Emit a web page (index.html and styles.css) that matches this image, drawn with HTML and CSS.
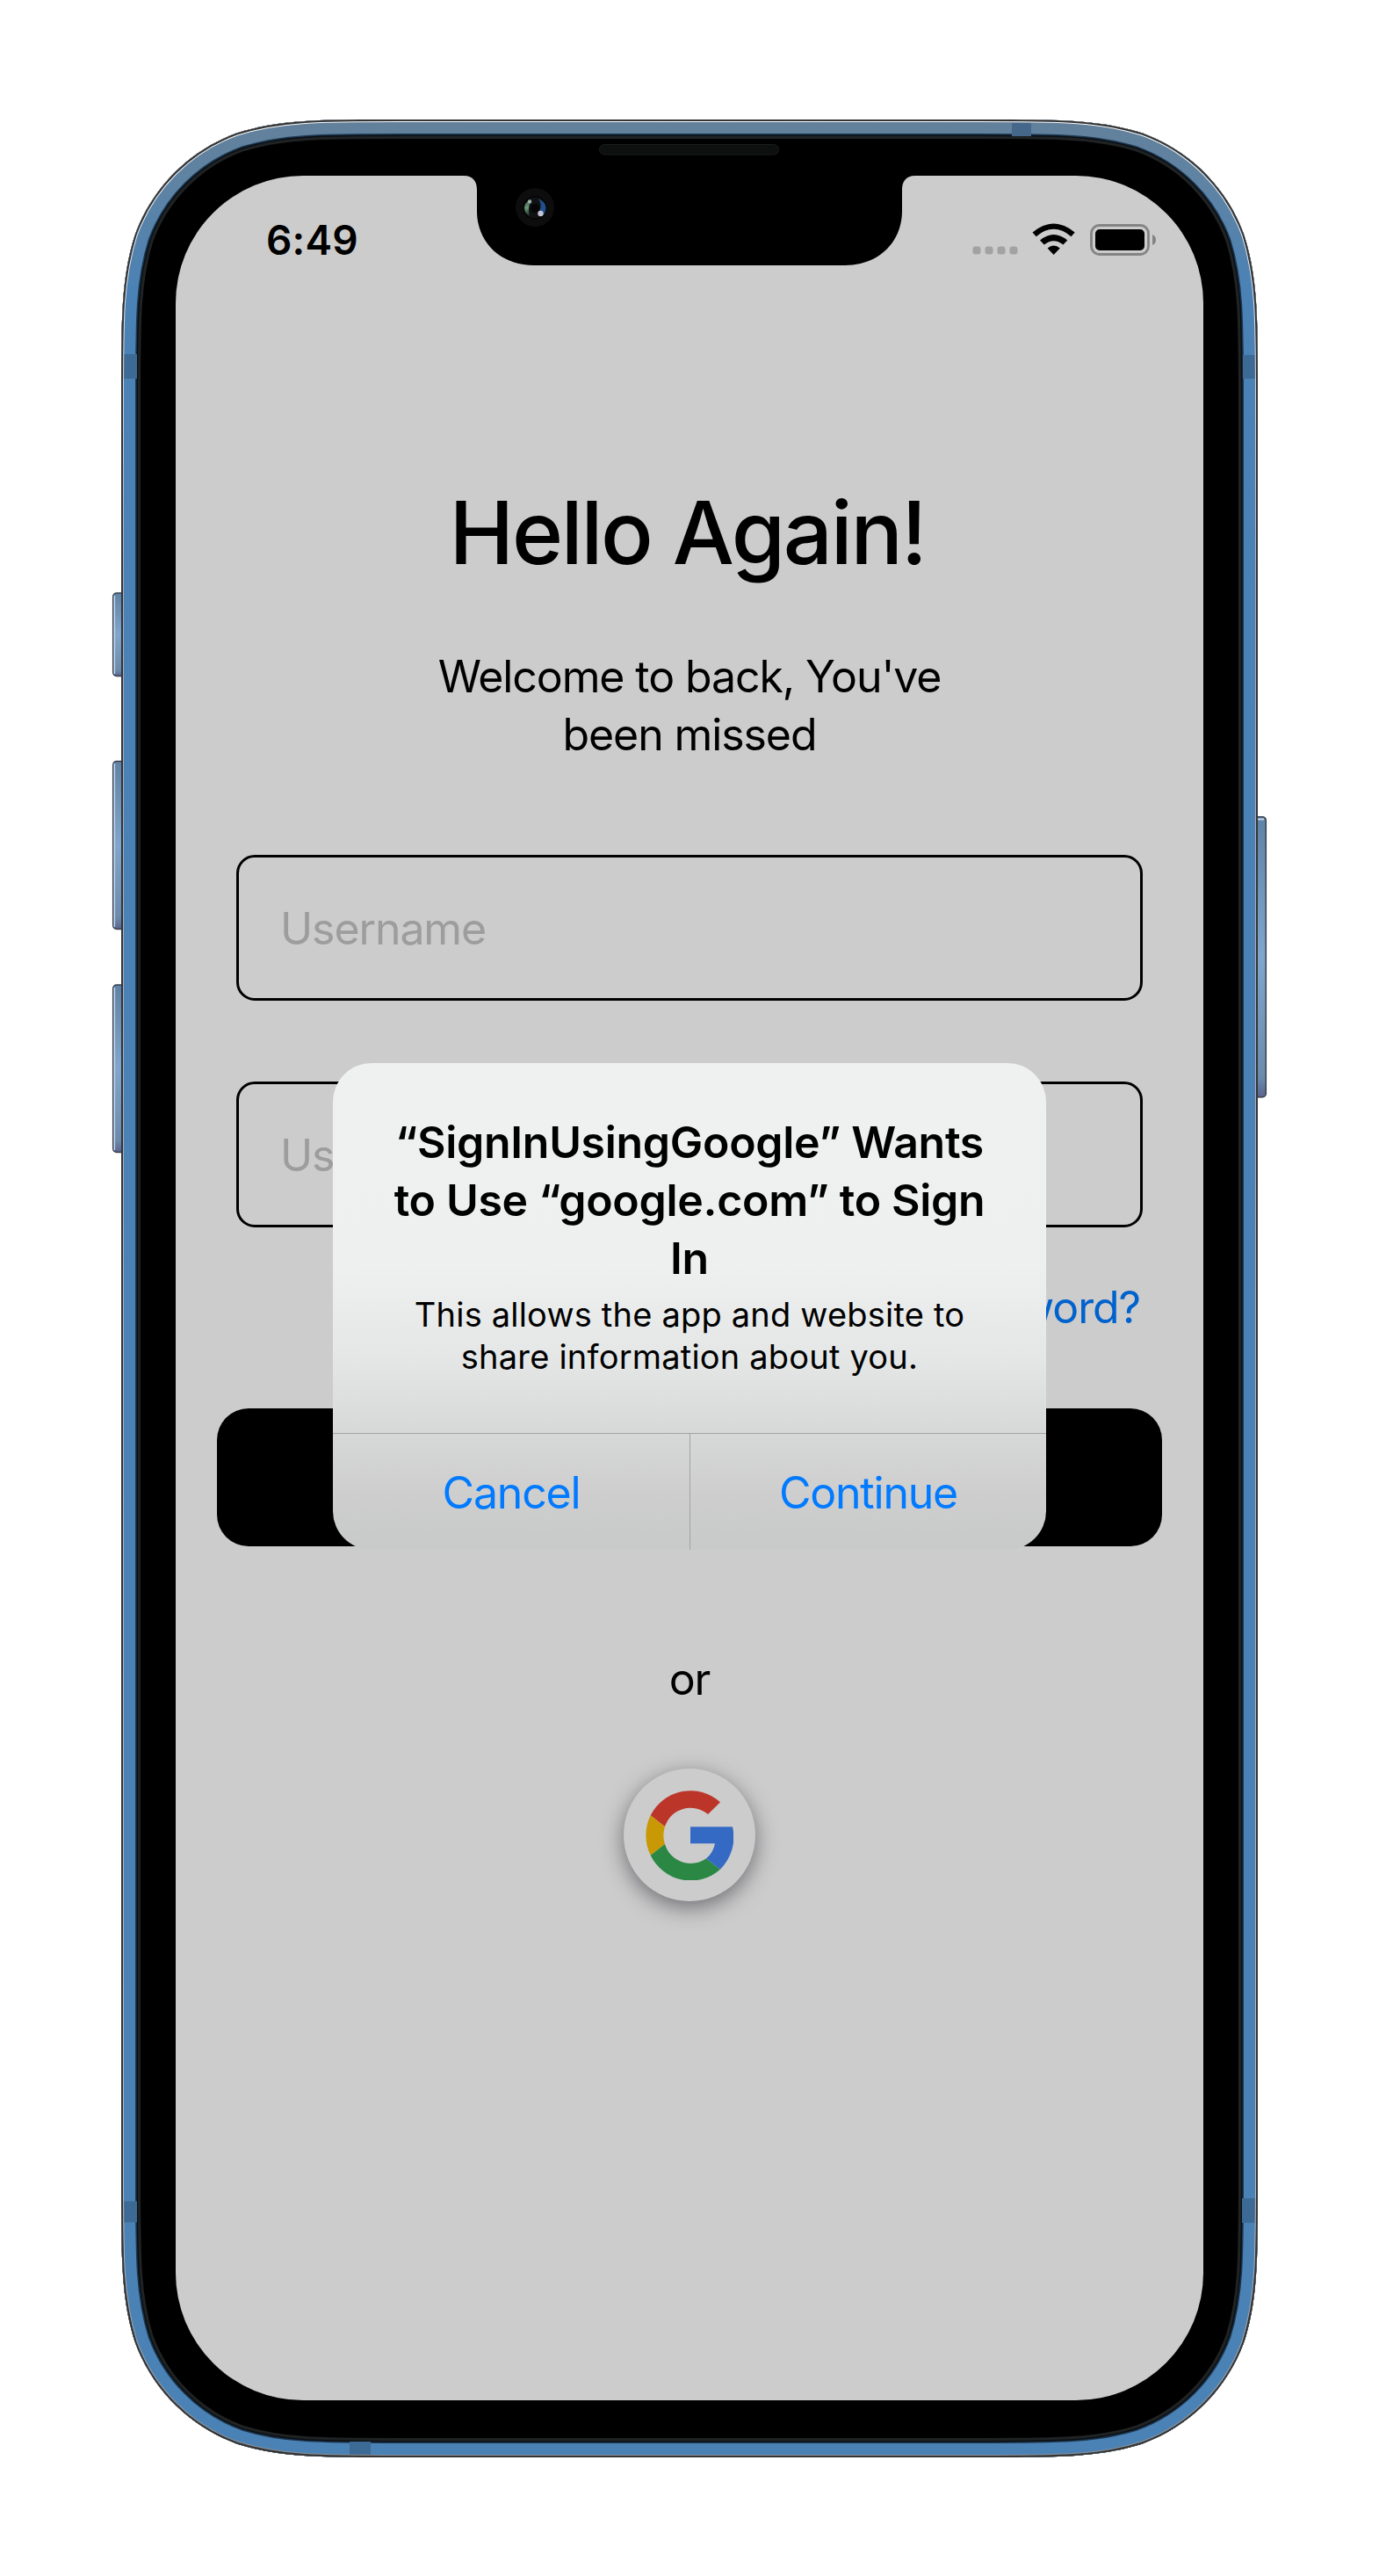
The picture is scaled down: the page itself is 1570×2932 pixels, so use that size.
FILE: index.html
```html
<!DOCTYPE html>
<html lang="en">
<head>
<meta charset="utf-8">
<title>Hello Again!</title>
<link rel="stylesheet" href="styles.css">
</head>
<body>
<div class="device">
  <svg class="frame" viewBox="0 0 1570 2932" aria-hidden="true">
    <defs>
      <linearGradient id="metal" gradientUnits="userSpaceOnUse" x1="0" y1="136" x2="0" y2="330">
        <stop offset="0" stop-color="#62809a"/><stop offset=".35" stop-color="#5f83a3"/><stop offset="1" stop-color="#4b82b5"/>
      </linearGradient>
      <linearGradient id="edge" gradientUnits="userSpaceOnUse" x1="0" y1="136" x2="0" y2="2797">
        <stop offset="0" stop-color="#fff"/><stop offset=".1" stop-color="#dcdde6"/><stop offset=".2" stop-color="#a9abc0"/><stop offset=".9" stop-color="#b9b9c2"/><stop offset="1" stop-color="#8b8f94"/>
      </linearGradient>
      <linearGradient id="key" x1="0" y1="0" x2="0" y2="1">
        <stop offset="0" stop-color="#5f83a6"/><stop offset=".5" stop-color="#7fa6cd"/><stop offset=".93" stop-color="#6b8bac"/><stop offset="1" stop-color="#5a6490"/>
      </linearGradient>
      <path id="body" d="M138 454C138 362.400 138 316.600 153.600 267.400C173.200 213.500 215.500 171.200 269.400 151.600C318.600 136 364.400 136 456 136H1114C1205.600 136 1251.400 136 1300.600 151.600C1354.500 171.200 1396.800 213.500 1416.400 267.400C1432 316.600 1432 362.400 1432 454V2479C1432 2570.600 1432 2616.400 1416.400 2665.600C1396.800 2719.500 1354.500 2761.800 1300.600 2781.400C1251.400 2797 1205.600 2797 1114 2797H456C364.400 2797 318.600 2797 269.400 2781.400C215.500 2761.800 173.200 2719.500 153.600 2665.600C138 2616.400 138 2570.600 138 2479Z"/>
      <clipPath id="bodyClip"><use href="#body"/></clipPath>
    </defs>
    <g fill="url(#key)" stroke="#3a3f4c" stroke-width="1.500">
      <rect x="128.700" y="675" width="20" height="94.500" rx="4"/>
      <rect x="128.700" y="866.500" width="20" height="191" rx="4"/>
      <rect x="128.700" y="1121" width="20" height="190.500" rx="4"/>
      <rect x="1421" y="929.700" width="20.300" height="319" rx="4"/>
    </g>
    <g fill="#c3d2e6">
      <rect x="129.500" y="678" width="1.600" height="89"/><rect x="129.500" y="869" width="1.600" height="186"/><rect x="129.500" y="1124" width="1.600" height="185"/>
      <rect x="1432" y="931.500" width="7" height="2"/>
    </g>
    <g clip-path="url(#bodyClip)" fill="none">
      <use href="#body" fill="#000"/>
      <use href="#body" stroke="#202324" stroke-width="44"/>
      <use href="#body" stroke="#0a0f14" stroke-width="38"/>
      <use href="#body" stroke="#1c3650" stroke-width="35"/>
      <use href="#body" stroke="url(#metal)" stroke-width="32"/>
      <g fill="#3d6a94">
        <rect x="141" y="403" width="15" height="28"/><rect x="1415" y="404" width="14" height="27"/>
        <rect x="141" y="2505.500" width="15" height="24"/><rect x="1414" y="2502" width="15" height="28"/>
        <rect x="1152" y="140" width="22" height="15" fill="#45688a"/><rect x="398" y="2779" width="24" height="15"/>
      </g>
      <use href="#body" stroke="url(#edge)" stroke-width="6"/>
      <use href="#body" stroke="#333435" stroke-width="4"/>
    </g>
    <rect x="682.500" y="164.500" width="204" height="11.500" rx="5.700" fill="#0e0f0f" stroke="#1b1c1c"/>
  </svg>

  <main class="screen">
    <header class="status">
      <span class="time">6:49</span>
      <svg class="indicators" viewBox="0 0 210 40" aria-hidden="true">
        <g fill="#a2a2a2"><rect x=".500" y="27.500" width="9" height="9" rx="3"/><rect x="14.500" y="27.500" width="9" height="9" rx="3"/><rect x="28.500" y="27.500" width="9" height="9" rx="3"/><rect x="42.500" y="27.500" width="9" height="9" rx="3"/></g>
        <path d="M68.500 11.500Q92.600-8.500 116.700 11.500L112.500 16.200Q92.600-.5 72.700 16.200ZM77 20.500Q92.600 7.500 108.300 20.500L103.400 25.600Q92.600 17 81.800 25.600ZM85.600 29.500Q92.600 23.500 99.800 29.500L92.600 37Z"/>
        <rect x="135.500" y="3.500" width="65" height="33" rx="9" fill="none" stroke="#848484" stroke-width="2.800"/>
        <rect x="140" y="8" width="56" height="24" rx="5"/>
        <path d="M205 14a6.500 6.500 0 0 1 0 12z" fill="#848484"/>
      </svg>
    </header>
    <svg class="notch" viewBox="0 0 514 102" aria-hidden="true">
      <defs>
        <linearGradient id="lensGreen" x1="0" y1="0" x2="0" y2="1">
          <stop offset="0" stop-color="#3c5548"/><stop offset=".5" stop-color="#6a9a7e"/><stop offset="1" stop-color="#1c2a22"/>
        </linearGradient>
      </defs>
      <path d="M0 0C11 0 15 7 15 16V40C15 76 42 102 80 102H434C472 102 499 76 499 40V16C499 7 503 0 514 0Z"/>
      <circle cx="81" cy="36" r="22" fill="#0d0d0d"/>
      <circle cx="81" cy="36.500" r="13.500" fill="#050505"/>
      <circle cx="81" cy="36.500" r="12" fill="#101112"/>
      <path d="M77 27Q72 37 75 46Q69 43 69 36.500T77 27Z" fill="url(#lensGreen)"/>
      <path d="M85 26Q93 30 93.500 36Q93.500 43 89 46Q84 43 87 38Q89 32 85 26Z" fill="#1f4f8c"/>
      <circle cx="81" cy="37" r="5" fill="#050505"/>
      <circle cx="75" cy="29.500" r="2.200" fill="#9cb0a4"/>
      <circle cx="87.500" cy="43" r="3.200" fill="#c5c4d2"/>
    </svg>

    <h1 class="title">Hello Again!</h1>
    <p class="welcome">Welcome to back, You've<br>been missed</p>
    <div class="fields">
      <div class="field">Username</div>
      <div class="field">Username</div>
    </div>
    <a class="forgot">Forgot Password?</a>
    <div class="submit"></div>
    <p class="or">or</p>
    <div class="google">
      <svg viewBox="225 533 300 306" aria-label="Google">
        <path fill="#bc3529" d="M480 573A152 153 0 0 0 242 618L291 656A92 92 0 0 1 438 614Z"/>
        <path fill="#c99805" d="M242 618A152 153 0 0 0 242 754L291 716A95 95 0 0 1 291 656Z"/>
        <path fill="#2b8744" d="M242 754A152 153 0 0 0 480 802L432 765A92 92 0 0 1 291 716Z"/>
        <path fill="#346ac3" d="M480 802A152 153 0 0 0 522 657H378V714H462Q456 746 432 765Z"/>
      </svg>
    </div>

    <section class="alert" role="dialog">
      <h2 class="alert-title">“SignInUsingGoogle” Wants<br>to Use “google.com” to Sign<br>In</h2>
      <p class="alert-text">This allows the app and website to<br>share information about you.</p>
      <div class="actions">
        <span class="action">Cancel</span>
        <span class="action">Continue</span>
      </div>
    </section>
  </main>
</div>
</body>
</html>
```
FILE: styles.css
```css
* { box-sizing: border-box; margin: 0; padding: 0; }

body {
  background: #fff;
  color: #000;
  font-family: Inter, "Liberation Sans", sans-serif;
  font-size: 50px;
  line-height: 66px;
  letter-spacing: -1.1px;
}

.device {
  display: grid;
  width: 1570px;
  height: 2932px;
}

.frame {
  grid-area: 1 / 1;
  width: 1570px;
  height: 2932px;
}

.screen {
  grid-area: 1 / 1;
  position: relative;
  display: flex;
  flex-direction: column;
  align-items: center;
  width: 1170px;
  height: 2532px;
  margin: 200px;
  border-radius: 145px;
  overflow: hidden;
  background: #ccc;
}

.status {
  display: flex;
  justify-content: space-between;
  width: 100%;
  height: 346px;
  padding: 43px 53px 0 103px;
}

.time {
  font-size: 46px;
  font-weight: 600;
  line-height: 60px;
  letter-spacing: .2px;
}

.indicators {
  width: 210px;
  height: 40px;
  margin-top: 10px;
}

.notch {
  position: absolute;
  top: 0;
  left: 328px;
  width: 514px;
  height: 102px;
}

.title {
  padding-right: 5px;
  font-size: 99px;
  font-weight: 500;
  line-height: 120px;
  letter-spacing: -2.3px;
  white-space: nowrap;
}

.welcome {
  margin-top: 71px;
  text-align: center;
  white-space: nowrap;
}

.fields {
  display: flex;
  flex-direction: column;
  gap: 92px;
  width: 1032px;
  margin-top: 104px;
}

.field {
  height: 166px;
  padding: 48px 47px;
  border: 3px solid #000;
  border-radius: 21px;
  color: #9d9d9d;
}

.forgot {
  align-self: flex-end;
  margin: 58px 72px 0 0;
  color: #0062cc;
}

.submit {
  width: 1076px;
  height: 157px;
  margin-top: 82px;
  border-radius: 36px;
  background: #000;
}

.or { margin-top: 118px; }

.google {
  display: flex;
  align-items: center;
  justify-content: center;
  width: 150px;
  height: 151px;
  margin-top: 69px;
  border-radius: 50%;
  background: #ccc;
  box-shadow: 0 7px 24px rgba(20, 20, 30, .5);
}

.google svg { width: 100px; height: 102px; }

.alert {
  position: absolute;
  top: 1010px;
  left: 179px;
  width: 812px;
  height: 554px;
  padding-top: 57px;
  border-radius: 44px;
  overflow: hidden;
  background: linear-gradient(#eff0f0 0, #eef0f0 230px, #e5e7e7 335px, #d7d8d8 420px, #cecece 490px, #c8c9c9 554px);
  text-align: center;
  white-space: nowrap;
}

.alert-title {
  font-size: 50px;
  font-weight: 600;
  line-height: 66px;
  letter-spacing: -.3px;
}

.alert-text {
  margin-top: 7px;
  font-size: 38px;
  line-height: 48px;
  letter-spacing: .2px;
}

.actions {
  display: grid;
  grid-template-columns: 407px 405px;
  margin-top: 63px;
  border-top: 1px solid #a1a3a2;
}

.action {
  height: 133px;
  line-height: 134px;
  letter-spacing: -1.2px;
  color: #007aff;
}

.action:first-child { border-right: 1px solid #a1a3a2; }
```
